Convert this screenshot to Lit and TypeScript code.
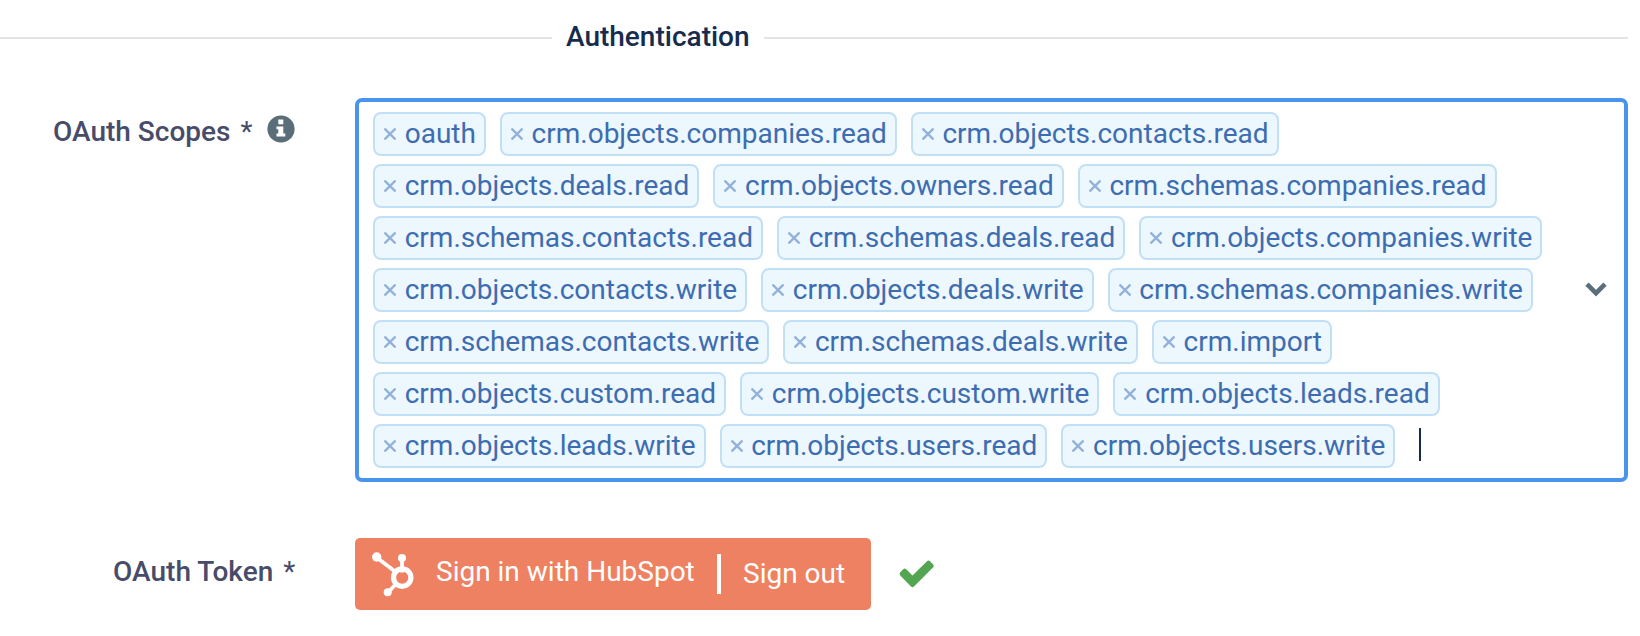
import { LitElement, html, css } from "lit";
import { customElement, property } from "lit/decorators.js";

@customElement("scope-tag")
class ScopeTag extends LitElement {
  static styles = css`
    :host {
      display: flex;
      align-items: center;
      box-sizing: border-box;
      height: 44px;
      padding: 0 8px 0 9px;
      border: 2px solid #c2e0f5;
      border-radius: 8px;
      background: #ecf7fe;
      color: #3e6cb0;
      white-space: nowrap;
    }
    .remove {
      width: 12px;
      height: 12px;
      margin-right: 8.7px;
      flex: none;
    }
    .name {
      line-height: 40px;
    }
  `;
  @property() name = "";
  render() {
    return html`
      <svg class="remove" viewBox="0 0 12 12">
        <path d="M.5.5 11.5 11.5M11.5.5.5 11.5" fill="none" stroke="#93b2d9" stroke-width="2.3" />
      </svg>
      <span class="name">${this.name}</span>
    `;
  }
}

@customElement("app-root")
class AppRoot extends LitElement {
  static styles = css`
    :host {
      display: block;
      box-sizing: border-box;
      height: 636px;
      overflow: hidden;
      background: #fff;
      font-family: Roboto, "Liberation Sans", sans-serif;
      font-size: 28px;
    }
    .heading {
      display: flex;
      align-items: center;
      height: 76px;
      margin-right: 12px;
      gap: 14px;
      color: #172b4d;
      font-weight: 500;
    }
    .rule {
      height: 2px;
      background: #e4e4e4;
    }
    .rule.left {
      width: 552px;
    }
    .rule.right {
      flex: 1;
    }
    .title {
      line-height: 34px;
      margin-top: -2px;
    }
    .row {
      display: grid;
      grid-template-columns: 294px 1fr;
      column-gap: 61px;
      margin-right: 12px;
    }
    .scopes {
      margin-top: 22px;
    }
    .token {
      margin-top: 56px;
    }
    .label {
      display: flex;
      justify-content: flex-end;
      align-items: center;
      height: 34px;
      color: #484b69;
      font-weight: 500;
      white-space: nowrap;
    }
    .scopes .label {
      margin-top: 16px;
    }
    .token .label {
      margin: 16px -1.3px 0 0;
    }
    .star {
      font-weight: 400;
      margin-left: 10px;
    }
    .info {
      width: 28px;
      height: 28px;
      margin: -4px -1px 0 14.5px;
    }
    .select {
      display: flex;
      box-sizing: border-box;
      height: 384px;
      border: 4px solid #4a94ec;
      border-radius: 7px;
      padding: 10px 17px 10px 14px;
    }
    .tags {
      flex: 1;
      display: flex;
      flex-direction: column;
      gap: 8px;
    }
    .line {
      display: flex;
      align-items: center;
      gap: 14px;
    }
    .caret {
      width: 2px;
      height: 33px;
      margin: -4px 0 0 10px;
      background: #172b4d;
    }
    .chevron {
      align-self: center;
      width: 22px;
      height: 16px;
      margin-top: -2px;
    }
    .actions {
      display: flex;
      align-items: center;
    }
    .button {
      display: flex;
      align-items: center;
      box-sizing: border-box;
      width: 516px;
      height: 72px;
      padding-left: 16px;
      border-radius: 5px;
      background: #ee8162;
      color: #fff;
      white-space: nowrap;
    }
    .logo {
      width: 44px;
      height: 46px;
      margin: 2px 21px 0 0;
    }
    .signin {
      width: 260px;
      margin-top: -6px;
    }
    .signout {
      margin-top: -2px;
    }
    .bar {
      width: 4px;
      height: 40px;
      margin: 0 22px 0 21px;
      background: #fff;
    }
    .check {
      width: 36px;
      height: 28px;
      margin-left: 28px;
    }
  `;

  private lines = [
    ["oauth", "crm.objects.companies.read", "crm.objects.contacts.read"],
    ["crm.objects.deals.read", "crm.objects.owners.read", "crm.schemas.companies.read"],
    ["crm.schemas.contacts.read", "crm.schemas.deals.read", "crm.objects.companies.write"],
    ["crm.objects.contacts.write", "crm.objects.deals.write", "crm.schemas.companies.write"],
    ["crm.schemas.contacts.write", "crm.schemas.deals.write", "crm.import"],
    ["crm.objects.custom.read", "crm.objects.custom.write", "crm.objects.leads.read"],
    ["crm.objects.leads.write", "crm.objects.users.read", "crm.objects.users.write"],
  ];

  render() {
    const last = this.lines.length - 1;
    return html`
      <div class="heading">
        <div class="rule left"></div>
        <span class="title">Authentication</span>
        <div class="rule right"></div>
      </div>
      <div class="row scopes">
        <div class="label">
          <span>OAuth Scopes</span><span class="star">*</span>
          <svg class="info" viewBox="0 0 28 28">
            <circle cx="14" cy="14" r="13.6" fill="#5a6e7a" />
            <path d="M11.3 4.6h5v4.7h-5zM9.5 11.4h6.8v7.2h2v2.8H9.5v-2.8h1.8v-4.4H9.5z" fill="#fff" />
          </svg>
        </div>
        <div class="select">
          <div class="tags">
            ${this.lines.map(
              (line, i) => html`<div class="line">
                ${line.map((name) => html`<scope-tag .name=${name}></scope-tag>`)}
                ${i === last ? html`<div class="caret"></div>` : null}
              </div>`
            )}
          </div>
          <svg class="chevron" viewBox="0 0 22 16">
            <path d="M2 3.2 11 12.2 20 3.2" fill="none" stroke="#5a6e7a" stroke-width="4.6" />
          </svg>
        </div>
      </div>
      <div class="row token">
        <div class="label"><span>OAuth Token</span><span class="star">*</span></div>
        <div class="actions">
          <div class="button">
            <svg class="logo" viewBox="0 0 44 46">
              <path d="M5.7 5.6 25 20.3M31 6.4v14M17 40.500 24 33" fill="none" stroke="#fff" stroke-width="3.8" />
              <circle cx="5.700" cy="5" r="4.700" fill="#fff" />
              <circle cx="31" cy="5.900" r="4" fill="#fff" />
              <circle cx="16.700" cy="40.200" r="4" fill="#fff" />
              <circle cx="31.200" cy="25.600" r="8.700" fill="none" stroke="#fff" stroke-width="5.200" />
            </svg>
            <span class="signin">Sign in with HubSpot</span>
            <span class="bar"></span>
            <span class="signout">Sign out</span>
          </div>
          <svg class="check" viewBox="0 0 36 28">
            <path d="M1.200 12.200 4.200 9.200Q5.700 8 7.200 9.200L13.500 15.500 28 1.200Q29.500 0 31 1.200L34.200 4.400Q35.400 5.800 34.200 7.200L15 26.600Q13.500 27.800 12 26.600L1.200 15.500Q0 13.800 1.200 12.200Z" fill="#53a551" />
          </svg>
        </div>
      </div>
    `;
  }
}
